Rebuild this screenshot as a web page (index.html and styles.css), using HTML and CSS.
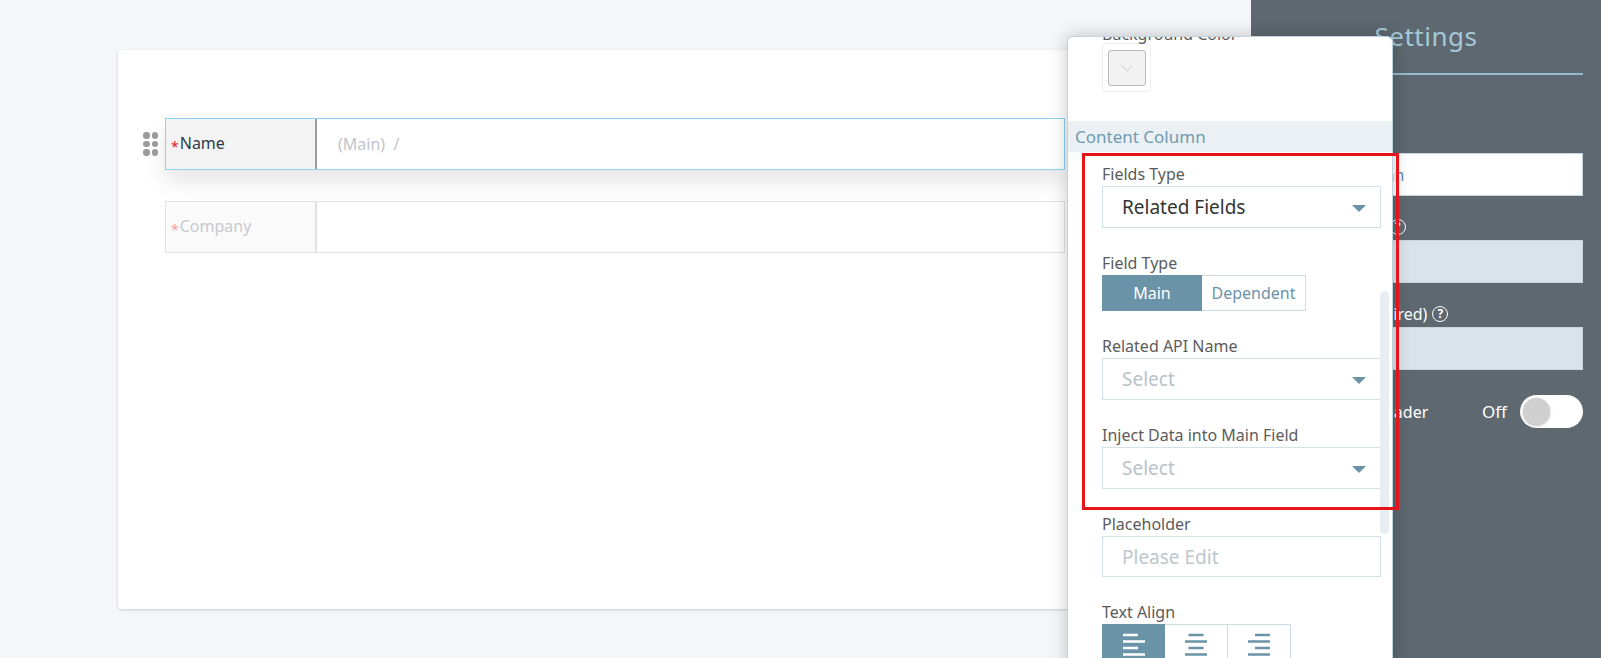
FILE: index.html
```html
<!DOCTYPE html>
<html lang="en">
<head>
  <meta charset="UTF-8">
  <meta name="viewport" content="width=device-width, initial-scale=1.0">
  <title>Form Designer</title>
  <link rel="stylesheet" href="styles.css">
</head>
<body>

<div class="app">
  <main class="canvas">
    <div class="form-card">
      <div class="field-row is-active">
        <span class="drag-handle"><i></i><i></i><i></i><i></i><i></i><i></i></span>
        <div class="field-label"><span class="req">*</span>Name</div>
        <div class="field-input">(Main)&nbsp;&nbsp;/</div>
      </div>
      <div class="field-row is-muted">
        <div class="field-label"><span class="req">*</span>Company</div>
        <div class="field-input"></div>
      </div>
    </div>
  </main>

  <aside class="settings">
    <h2 class="settings-title">Settings</h2>

    <div class="set-group first">
      <label class="set-label">Column Name</label>
      <div class="set-input white">Relation Column</div>
    </div>
    <div class="set-group">
      <label class="set-label">Placeholder Tip <span class="help">?</span></label>
      <div class="set-input"></div>
    </div>
    <div class="set-group">
      <label class="set-label">Input Hint (Required) <span class="help">?</span></label>
      <div class="set-input"></div>
    </div>
    <div class="set-toggle-row">
      <span class="set-label">Show Groups Header</span>
      <span class="toggle-wrap">Off <span class="toggle"><span class="knob"></span></span></span>
    </div>
  </aside>
</div>

<div class="popover">
  <div class="popover-body">
    <div class="pop-section">
      <div class="pop-label swatch-label">Background Color</div>
      <div class="swatch">
        <div class="swatch-inner">
          <svg width="14" height="8" viewBox="0 0 14 8"><path d="M1 1 L7 7 L13 1" fill="none" stroke="#dcdcdc" stroke-width="1.3"/></svg>
        </div>
      </div>
    </div>

    <div class="pop-header">Content Column</div>

    <div class="pop-content">
      <div class="pop-group">
        <div class="pop-label">Fields Type</div>
        <div class="pop-select">Related Fields<span class="caret"></span></div>
      </div>
      <div class="pop-group">
        <div class="pop-label">Field Type</div>
        <div class="segmented">
          <button class="seg active">Main</button>
          <button class="seg">Dependent</button>
        </div>
      </div>
      <div class="pop-group">
        <div class="pop-label">Related API Name</div>
        <div class="pop-select placeholder">Select<span class="caret"></span></div>
      </div>
      <div class="pop-group">
        <div class="pop-label">Inject Data into Main Field</div>
        <div class="pop-select placeholder">Select<span class="caret"></span></div>
      </div>
      <div class="pop-group">
        <div class="pop-label">Placeholder</div>
        <div class="pop-input">Please Edit</div>
      </div>
      <div class="pop-group">
        <div class="pop-label">Text Align</div>
        <div class="align-group">
          <button class="align-btn active">
            <svg width="22" height="24" viewBox="0 0 22 24"><path d="M0 2h15M0 8.5h22M0 15h15M0 21.5h22" stroke="#fff" stroke-width="2.4"/></svg>
          </button>
          <button class="align-btn">
            <svg width="22" height="24" viewBox="0 0 22 24"><path d="M3.5 2h15M0 8.5h22M3.5 15h15M0 21.5h22" stroke="#6b93a8" stroke-width="2.4"/></svg>
          </button>
          <button class="align-btn">
            <svg width="22" height="24" viewBox="0 0 22 24"><path d="M7 2h15M0 8.5h22M7 15h15M0 21.5h22" stroke="#6b93a8" stroke-width="2.4"/></svg>
          </button>
        </div>
      </div>
    </div>
  </div>
  <div class="scroll-thumb"></div>
</div>

<div class="highlight-box"></div>

</body>
</html>
```

FILE: styles.css
```css
body {
  margin: 0;
  padding: 0;
  height: 100vh;
  overflow: hidden;
  background: #f4f6f9;
  font-family: "Noto Sans", "Open Sans", sans-serif;
  color: #333;
}

.app {
  display: flex;
  height: 100vh;
}

/* ---- form canvas ---- */

.canvas {
  flex: 1;
  padding: 50px 0 0 118px;
  overflow: hidden;
}

.form-card {
  width: 1100px;
  height: 559px;
  box-sizing: border-box;
  padding: 68px 0 0 47px;
  background: #fff;
  border-radius: 4px;
  box-shadow: 0 1px 3px rgba(0, 0, 0, 0.18);
}

.field-row {
  position: relative;
  display: flex;
  width: 900px;
  height: 52px;
  box-sizing: border-box;
  border: 1px solid #e3e3e3;
  margin-bottom: 31px;
  font-size: 16px;
}

.field-row.is-active {
  border-color: #8ed2f2;
  box-shadow: 0 12px 22px rgba(0, 0, 0, 0.1);
}

.drag-handle {
  position: absolute;
  left: -23px;
  top: 13px;
  width: 15px;
  display: flex;
  flex-wrap: wrap;
  gap: 2px;
}

.drag-handle i {
  width: 6.5px;
  height: 6.5px;
  border-radius: 50%;
  background: #9a9a9a;
}

.field-label {
  width: 151px;
  box-sizing: border-box;
  display: flex;
  align-items: center;
  padding: 0 0 2px 5px;
  background: #f3f3f3;
  border-right: 2px solid #9c9c9c;
  color: #2f3a4a;
}

.req {
  color: #e8202a;
  font-size: 14px;
  margin-right: 1px;
  position: relative;
  top: 3px;
}

.field-input {
  flex: 1;
  display: flex;
  align-items: center;
  padding-left: 21px;
  color: #c0c4cc;
}

.is-muted .field-label {
  background: #fafafa;
  border-right-color: #e2e2e2;
  color: #c6cad1;
}

.is-muted .req {
  color: #f5a3a3;
}

/* ---- settings sidebar ---- */

.settings {
  width: 350px;
  flex-shrink: 0;
  box-sizing: border-box;
  padding: 0 18px;
  background: #5d6870;
  color: #fff;
}

.settings-title {
  margin: 0;
  padding: 18px 0 19px;
  font-size: 26px;
  font-weight: 400;
  letter-spacing: 0.5px;
  text-align: center;
  color: #a6c8d8;
  border-bottom: 2px solid #93bccf;
}

.set-group {
  margin-top: 20px;
}

.set-group.first {
  margin-top: 54px;
}

.set-label {
  display: flex;
  align-items: center;
  gap: 5px;
  height: 22px;
  margin-bottom: 2px;
  font-size: 16px;
  color: #fff;
}

.help {
  display: inline-flex;
  align-items: center;
  justify-content: center;
  width: 14px;
  height: 14px;
  border: 1.8px solid #fff;
  border-radius: 50%;
  font-size: 12px;
  font-weight: 700;
  line-height: 1;
}

.set-input {
  height: 43px;
  box-sizing: border-box;
  border: 1px solid #c7d6de;
  background: #d8e3ea;
  padding: 0 10px;
  display: flex;
  align-items: center;
  color: #5d8aa5;
  font-size: 16px;
}

.set-input.white {
  background: #fff;
}

.set-toggle-row {
  margin-top: 25px;
  display: flex;
  justify-content: space-between;
  align-items: center;
  height: 33px;
}

.set-toggle-row .set-label {
  margin: 0;
}

.toggle-wrap {
  display: flex;
  align-items: center;
  gap: 13px;
  font-size: 17px;
}

.toggle {
  width: 63px;
  height: 33px;
  box-sizing: border-box;
  padding: 3px;
  border-radius: 17px;
  background: #fff;
  display: flex;
  align-items: center;
}

.knob {
  width: 27px;
  height: 27px;
  border-radius: 50%;
  background: #cfcfcf;
  box-shadow: 0 1px 3px rgba(0, 0, 0, 0.25);
}

/* ---- popover ---- */

.popover {
  position: absolute;
  left: 1067px;
  top: 36px;
  width: 326px;
  height: 640px;
  box-sizing: border-box;
  background: #fff;
  border: 1px solid #bfd3de;
  border-radius: 6px;
  box-shadow: 0 0 18px rgba(0, 0, 0, 0.22);
  overflow: hidden;
}

.popover-body {
  margin-top: -14px;
}

.pop-section {
  padding-left: 34px;
}

.pop-label {
  font-size: 16px;
  line-height: 23px;
  color: #5b5b5b;
}

.swatch-label {
  margin-bottom: -3px;
}

.swatch {
  width: 49px;
  height: 49px;
  box-sizing: border-box;
  border: 1px solid #ededed;
  border-radius: 5px;
  display: flex;
  align-items: center;
  justify-content: center;
}

.swatch-inner {
  width: 38px;
  height: 36px;
  box-sizing: border-box;
  background: #f2f2f2;
  border: 1px solid #b9b9b9;
  border-radius: 3px;
  display: flex;
  align-items: center;
  justify-content: center;
}

.pop-header {
  margin-top: 29px;
  height: 31px;
  line-height: 31px;
  padding-left: 7px;
  background: #ebf0f4;
  color: #6e9bb0;
  font-size: 17px;
}

.pop-content {
  padding: 11px 11px 0 34px;
}

.pop-group {
  margin-bottom: 24px;
}

.pop-select,
.pop-input {
  position: relative;
  height: 42px;
  box-sizing: border-box;
  border: 1px solid #d3e1e8;
  padding-left: 19px;
  display: flex;
  align-items: center;
  font-size: 19px;
  color: #333;
}

.pop-input {
  height: 41px;
  color: #bcc6ce;
}

.placeholder {
  color: #b8c2ca;
}

.caret {
  position: absolute;
  right: 14px;
  top: 18px;
  width: 0;
  height: 0;
  border-left: 7px solid transparent;
  border-right: 7px solid transparent;
  border-top: 7px solid #6b93a8;
}

.segmented {
  display: flex;
}

.seg {
  height: 36px;
  box-sizing: border-box;
  border: 1px solid #cddce4;
  background: #fff;
  color: #6b93a8;
  font-family: inherit;
  font-size: 16px;
  padding: 0;
}

.seg.active {
  width: 100px;
  background: #6b93a8;
  border-color: #6b93a8;
  color: #fff;
}

.seg + .seg {
  width: 104px;
  border-left: none;
}

.align-group {
  display: flex;
}

.align-btn {
  width: 63px;
  height: 44px;
  box-sizing: border-box;
  border: 1px solid #cddce4;
  background: #fff;
  padding: 8px 0 0;
  display: flex;
  justify-content: center;
  align-items: flex-start;
}

.align-btn + .align-btn {
  border-left: none;
}

.align-btn.active {
  background: #6b93a8;
  border-color: #6b93a8;
}

.scroll-thumb {
  position: absolute;
  left: 312px;
  top: 254px;
  width: 9px;
  height: 243px;
  border-radius: 5px;
  background: #e8edf1;
}

/* annotation box drawn over the screenshot */
.highlight-box {
  position: absolute;
  left: 1082px;
  top: 153px;
  width: 317px;
  height: 357px;
  box-sizing: border-box;
  border: 3px solid #e8141c;
  pointer-events: none;
}
```
